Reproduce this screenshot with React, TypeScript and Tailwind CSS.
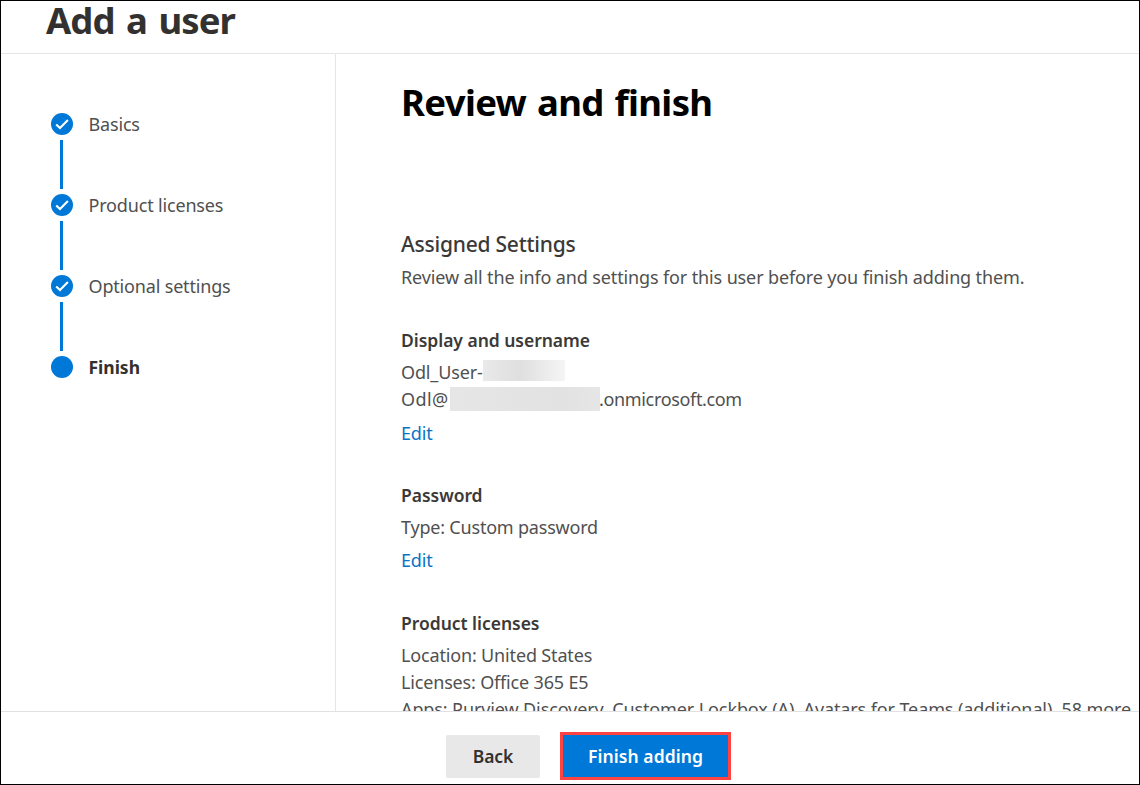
import type { ReactNode } from "react";

const steps = [
  { label: "Basics", done: true },
  { label: "Product licenses", done: true },
  { label: "Optional settings", done: true },
  { label: "Finish", done: false },
];

function StepMark({ done }: { done: boolean }) {
  return (
    <svg className="size-[22px] shrink-0" viewBox="0 0 22 22" fill="none">
      <circle cx="11" cy="11" r="11" fill="#0078d7" />
      {done && <path d="M5.2 11.4 9 15 16.9 7.1" stroke="#fff" strokeWidth="2.1" />}
    </svg>
  );
}

function Stepper() {
  return (
    <nav className="w-[335px] shrink-0 border-r border-[#e6e6e6] pt-[59px] pl-[50px]">
      {steps.map((step, i) => (
        <div key={step.label} className="flex h-[81px] gap-[15.5px]">
          <div className="flex w-[22px] flex-col items-center gap-[5px]">
            <StepMark done={step.done} />
            {i < steps.length - 1 && <div className="mr-px h-[49px] w-[3px] bg-[#0078d7]" />}
          </div>
          <span
            className={
              step.done
                ? "h-[22px] leading-[22px] tracking-[-0.17px]"
                : "h-[22px] text-[17.5px] leading-[22px] font-bold tracking-[-0.02px] text-[#323130]"
            }
          >
            {step.label}
          </span>
        </div>
      ))}
    </nav>
  );
}

function Section({ title, edit, children }: { title: string; edit?: string; children: ReactNode }) {
  return (
    <section>
      <h3 className="mb-[5px] text-[17.5px] leading-[27px] font-semibold tracking-[-0.03px] text-[#3a3938]">{title}</h3>
      {children}
      {edit && (
        <a href="#" className={`block text-[#0a74c4] ${edit}`}>
          Edit
        </a>
      )}
    </section>
  );
}

export default function App() {
  return (
    <div
      className="flex h-[785px] w-[1140px] flex-col overflow-hidden border border-black bg-white text-[18px] leading-[27px] font-normal tracking-[-0.14px] whitespace-nowrap text-[#505050]"
      style={{ fontFamily: '"Noto Sans", "Open Sans", sans-serif' }}
    >
      <header className="h-[53px] shrink-0 border-b border-[#e6e6e6] pl-[45px]">
        <h1 className="text-[36.5px] leading-[38px] font-bold tracking-[-0.95px] text-[#323130] [word-spacing:3px]">
          Add a user
        </h1>
      </header>

      <div className="flex h-[657px] shrink-0 overflow-hidden">
        <Stepper />
        <main className="min-w-0 flex-1 overflow-hidden pt-[24px] pl-[65px]">
          <h2 className="text-[36.5px] leading-[48px] font-bold tracking-[-0.65px] text-black [word-spacing:2px]">
            Review and finish
          </h2>
          <h3 className="mt-[104px] text-[21px] leading-[28px] font-medium tracking-[-0.23px] text-[#3a3938]">
            Assigned Settings
          </h3>
          <p className="mt-[6px] tracking-[-0.13px]">
            Review all the info and settings for this user before you finish adding them.
          </p>

          <div className="mt-[36px]">
            <Section title="Display and username" edit="mt-[7px]">
              <div className="flex">
                <span className="w-[82px]">Odl_User-</span>
                <span className="mt-px h-[21px] w-[82px] bg-linear-to-r from-[#e9e9e9] via-[#dfdfdf] via-45% to-[#f5f5f5]" />
              </div>
              <div className="flex">
                <span className="w-[49px] tracking-[0.4px]">Odl@</span>
                <span className="mt-px h-[24px] w-[150px] bg-linear-to-r from-[#e6e6e6] via-[#e2e2e2] via-75% to-[#e6e6e6]" />
                <span className="-ml-px tracking-[-0.34px]">.onmicrosoft.com</span>
              </div>
            </Section>
          </div>
          <div className="mt-[35px]">
            <Section title="Password" edit="mt-[6px]">
              <p className="tracking-[-0.2px]">Type: Custom password</p>
            </Section>
          </div>
          <div className="mt-[36px]">
            <Section title="Product licenses">
              <p className="tracking-[-0.16px]">Location: United States</p>
              <p className="tracking-[-0.17px]">Licenses: Office 365 E5</p>
              <p className="tracking-[-0.11px]">
                Apps: Purview Discovery, Customer Lockbox (A), Avatars for Teams (additional), 58 more
              </p>
            </Section>
          </div>
        </main>
      </div>

      <footer className="flex flex-1 items-start border-t border-[#e1e1e1] pt-[20px] pl-[445px]">
        <button className="mt-[3px] h-[43px] w-[94px] rounded-[2px] bg-[#e8e8e8] text-[17.5px] font-semibold text-[#323130]">
          Back
        </button>
        <button className="ml-[20px] h-[48px] w-[171px] border-[3px] border-[#ff4343] bg-[#0078d7] text-[17.5px] font-semibold tracking-[0.08px] text-white">
          Finish adding
        </button>
      </footer>
    </div>
  );
}
